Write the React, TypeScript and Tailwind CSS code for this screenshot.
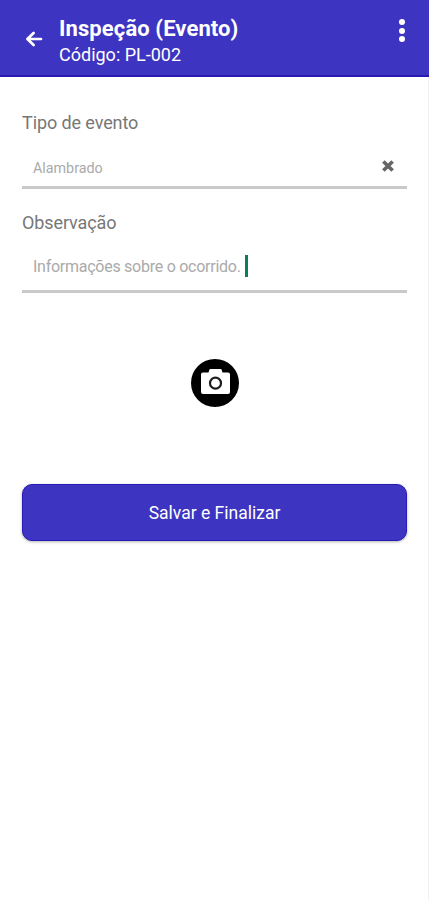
function BackIcon() {
  return (
    <svg viewBox="0 0 18 16" className="h-4 w-[18px]" fill="none" stroke="white" strokeWidth="2.7" strokeLinecap="round" strokeLinejoin="round" aria-hidden="true">
      <path d="M8.6 2 2.4 8l6.2 6M3 8h13" />
    </svg>
  );
}

function CameraIcon() {
  return (
    <svg viewBox="0 0 29 25" className="mb-[3px] ml-px h-[25px] w-[29px]" aria-hidden="true">
      <path fill="white" d="M9.500 0h10c.7 0 1 .4 1.200 1l.8 2.500H27a2 2 0 0 1 2 2V23a2 2 0 0 1-2 2H2a2 2 0 0 1-2-2V5.500a2 2 0 0 1 2-2h5.500L8.300 1c.200-.6.500-1 1.200-1Z" />
      <circle cx="14.500" cy="14.200" r="5.500" fill="white" stroke="#1c1c1c" strokeWidth="2.200" />
    </svg>
  );
}

export default function App() {
  return (
    <main className="min-h-[900px] border-r border-[#f0f0f0] bg-white font-[Roboto,sans-serif]">
      <header className="-mr-px flex h-[77px] items-start border-b-2 border-[#291ab1] bg-[#3d35c1] text-white">
        <button aria-label="Voltar" className="mt-[31px] ml-[25px]">
          <BackIcon />
        </button>
        <div className="ml-4 flex-1 pt-4 whitespace-nowrap">
          <h1 className="w-fit text-[22px] leading-[26px] font-bold tracking-[0.1px]">Inspeção (Evento)</h1>
          <p className="w-fit text-[18px] leading-[26px]">Código: PL-002</p>
        </div>
        <button aria-label="Mais opções" className="mt-[19px] mr-6 flex flex-col gap-[2.500px]">
          <span className="size-[6px] rounded-full bg-white" />
          <span className="size-[6px] rounded-full bg-white" />
          <span className="size-[6px] rounded-full bg-white" />
        </button>
      </header>

      <div className="pr-[21px] pl-[22px]">
        <div className="pt-[34px]">
          <h2 className="text-[18px] leading-6 tracking-[-0.1px] text-[#777]">Tipo de evento</h2>
          <div className="mt-3 flex h-[42px] items-center justify-between border-b-[3px] border-[#c9c9c9] pt-[3px] pr-[13px] pl-[11px]">
            <span className="text-[14.300px] leading-5 text-[#aaa]">Alambrado</span>
            <svg viewBox="0 0 12 12" className="mb-1 size-3" stroke="#666" strokeWidth="3.600" aria-label="Limpar">
              <path d="m1.400 1.400 9.200 9.200m0-9.200-9.200 9.200" />
            </svg>
          </div>
        </div>

        <div className="pt-[22px]">
          <h2 className="text-[18px] leading-6 tracking-[-0.1px] text-[#777]">Observação</h2>
          <div className="mt-3 flex h-[46px] items-center border-b-[3px] border-[#c9c9c9] pb-1 pl-[11px]">
            <span className="text-[16px] leading-5 tracking-[-0.260px] text-[#aaa]">Informações sobre o ocorrido.</span>
            <span className="mb-0.5 ml-1 h-[22px] w-[3px] bg-[#0c7c5c]" />
          </div>
        </div>

        <div className="flex justify-center pt-[66px]">
          <button aria-label="Adicionar foto" className="flex size-12 items-center justify-center rounded-full bg-black">
            <CameraIcon />
          </button>
        </div>

        <button className="mt-[77px] flex h-[57px] w-full items-center justify-center rounded-[10px] border border-[#291ab1] bg-[#3d35c1] text-[17.500px] text-white shadow-[0_1px_3px_rgba(0,0,0,0.3)]">
          <span className="pt-px">Salvar e Finalizar</span>
        </button>
      </div>
    </main>
  );
}
